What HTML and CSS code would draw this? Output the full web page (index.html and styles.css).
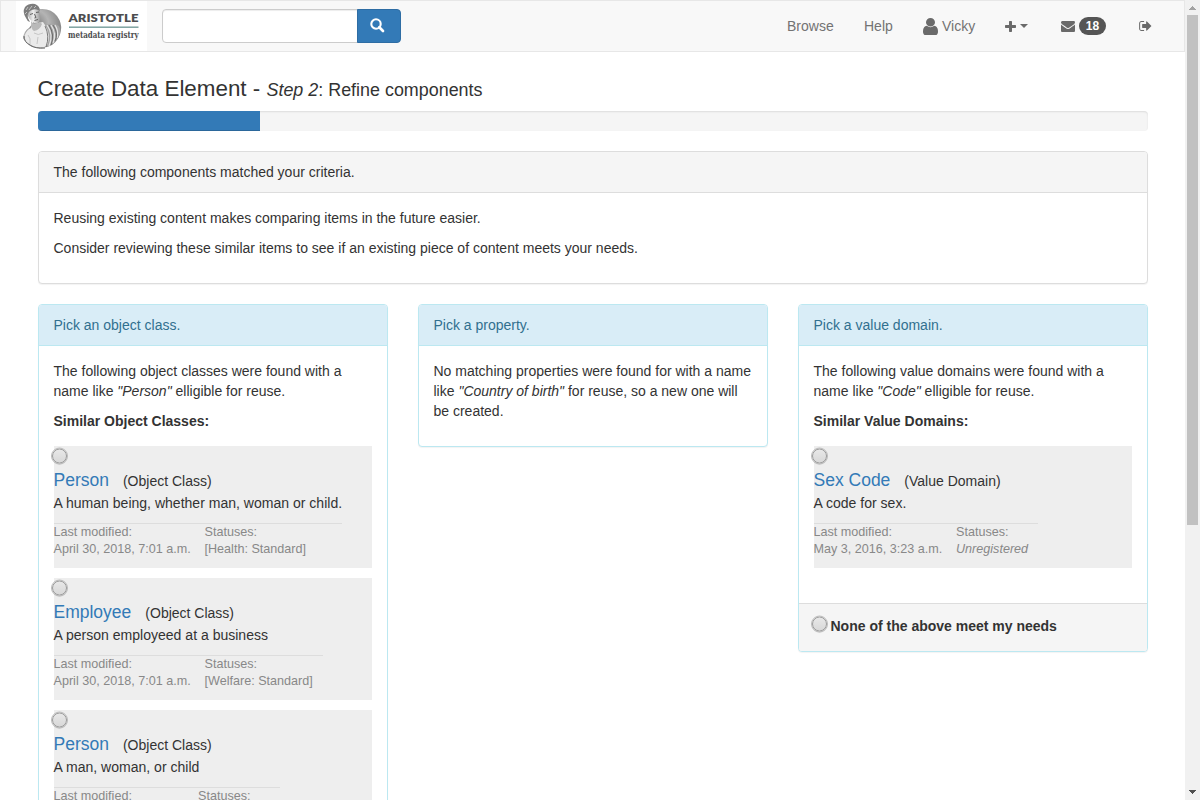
FILE: index.html
```html
<!DOCTYPE html>
<html lang="en">
<head>
<meta charset="utf-8">
<title>Create Data Element</title>
<link rel="stylesheet" href="styles.css">
</head>
<body>
<div class="page">
  <nav class="navbar">
    <a class="brand">
      <svg width="131" height="50" viewBox="0 0 131 50">
        <defs>
          <radialGradient id="shade" cx=".3" cy=".4" r=".75"><stop offset="0" stop-color="#777"/><stop offset=".5" stop-color="#b4b4b4"/><stop offset="1" stop-color="#808080"/></radialGradient>
          <linearGradient id="face" x1="0" x2="1"><stop offset="0" stop-color="#999"/><stop offset=".5" stop-color="#eee"/><stop offset="1" stop-color="#999"/></linearGradient>
          <filter id="soft"><feGaussianBlur stdDeviation=".5"/></filter>
        </defs>
        <rect width="131" height="50" fill="#fff"/>
        <g filter="url(#soft)">
          <path d="M24 8Q35 7 41 15Q46 22 45 29Q44 38 36 44Q27 49 16 46Q9 42 7 37Q8 30 13 27L17 22Z" fill="url(#shade)"/>
          <path d="M15 21Q17 25 22 22L27 21L31 27Q35 36 31 45Q24 48 15 45Q9 42 8 38Q9 31 13 28Q17 27 15 21Z" fill="#eaeaea"/>
          <path d="M15 20Q18 25 24 21L26 23Q24 29 18 30Q15 29 15 20Z" fill="#b9b9b9"/>
          <path d="M10 9Q13 4 20 6Q24 8 24 13Q25 18 23 21Q20 24 17 21Q12 18 10 9Z" fill="url(#face)"/>
          <path d="M10 17Q6 11 9 6Q13 2 19 3Q24 5 24 10L22 9Q18 7 14 10Q11 12 12 17L14 21Q11 20 10 17Z" fill="#7d7d7d"/>
          <path d="M10 9L12 6M13 9L16 5M18 7L20 5M9 13L11 11" stroke="#c9c9c9" stroke-width=".9" fill="none"/>
          <path d="M14 13.500L17 12.500M20 11.500L23 11M18.500 13L20 16.500L18.500 17M18.500 19.500L22 18.500" stroke="#555" stroke-width=".9" fill="none"/>
          <path d="M29 24Q37 21 43 25Q46 30 42 37Q38 43 31 46Q36 34 29 24Z" fill="#a5a5a5"/>
          <path d="M31 24Q38 34 33 45M35 24Q41 33 37 42M39 24Q43 30 41 37" stroke="#e5e5e5" stroke-width="1.200" fill="none"/>
          <path d="M33 24Q39 34 35 44M37 24Q43 33 39 40M29 25Q34 35 30 46" stroke="#5c5c5c" stroke-width=".8" fill="none"/>
          <path d="M8 35Q8 41 14 44Q20 48 29 47" stroke="#606060" stroke-width="1" fill="none"/>
          <path d="M12 34Q15 37 14 43M18 32Q22 35 27 32M22 36L21 43" stroke="#bdbdbd" stroke-width=".8" fill="none"/>
        </g>
        <text x="52.500" y="20.700" class="logo-name" textLength="70" lengthAdjust="spacingAndGlyphs">ARISTOTLE</text>
        <rect x="53" y="25.600" width="69.500" height="1.100" fill="#4f817e"/>
        <text x="52" y="37" class="logo-sub" textLength="70.500" lengthAdjust="spacingAndGlyphs">metadata registry</text>
      </svg>
    </a>
    <div class="search">
      <input class="search-input" type="text" aria-label="Search">
      <button class="search-button" aria-label="Search"><svg width="15" height="15" viewBox="0 0 15 15"><circle cx="6" cy="6" r="4.700" fill="none" stroke="#fff" stroke-width="2.100"/><path d="M9.300 9.300L13 13" stroke="#fff" stroke-width="2.700" stroke-linecap="round"/></svg></button>
    </div>
    <div class="menu">
      <a class="browse">Browse</a>
      <a class="help">Help</a>
      <a class="user"><svg width="15" height="17" viewBox="0 128 1280 1536" preserveAspectRatio="none"><path d="M1280 1399q0 109-62.500 187t-150.500 78h-854q-88 0-150.500-78t-62.500-187q0-85 8.500-160.500t31.500-152 58.500-131 94-89 134.500-34.500q131 128 313 128t313-128q76 0 134.500 34.500t94 89 58.500 131 31.500 152 8.500 160.500zm-256-887q0 159-112.500 271.500t-271.500 112.500-271.500-112.500-112.500-271.500 112.500-271.500 271.500-112.500 271.500 112.500 112.500 271.500z"/></svg><span>Vicky</span></a>
      <a class="create"><svg width="11" height="11" viewBox="0 0 11 11"><path d="M4.700 0h1.600q.7 0 .7.700v3.300h3.300q.7 0 .7.700v1.600q0 .7-.7.700H7v3.300q0 .7-.7.700H4.700q-.7 0-.7-.7V7H.7Q0 7 0 6.300V4.700Q0 4 .7 4H4V.7Q4 0 4.700 0z"/></svg><i class="caret"></i></a>
      <a class="inbox"><svg width="14" height="11" viewBox="0 256 1792 1408"><path d="M1792 710v794q0 66-47 113t-113 47h-1472q-66 0-113-47t-47-113v-794q44 49 101 87 362 246 497 345 57 42 92.500 65.500t94.500 48 110 24.500h2q51 0 110-24.500t94.500-48 92.500-65.500q170-123 498-345 57-39 100-87zm0-294q0 79-49 151t-122 123q-376 261-468 325-10 7-42.500 31t-54 38.500-52 32.500-57.500 27-50 9h-2q-23 0-50-9t-57.500-27-52-32.500-54-38.500-42.500-31q-91-64-262-182.500t-205-142.500q-62-42-117-115.500t-55-136.500q0-78 41.500-130t118.500-52h1472q65 0 112.500 47t47.500 113z"/></svg><span class="badge">18</span></a>
      <a class="logout"><svg width="12.500" height="10" viewBox="64 256 1568 1280"><path d="M704 1440q0 4 1 20t.5 26.500-3 23.500-10 19.500-20.500 6.500h-320q-119 0-203.500-84.500t-84.500-203.500v-704q0-119 84.500-203.500t203.500-84.500h320q13 0 22.500 9.500t9.500 22.500q0 4 1 20t.5 26.500-3 23.500-10 19.500-20.500 6.500h-320q-66 0-113 47t-47 113v704q0 66 47 113t113 47h312l11.500 1 11.500 3 8 5.500 7 9 2 13.500zm928-544q0 26-19 45l-544 544q-19 19-45 19t-45-19-19-45v-288h-448q-26 0-45-19t-19-45v-384q0-26 19-45t45-19h448v-288q0-26 19-45t45-19 45 19l544 544q19 19 19 45z"/></svg></a>
    </div>
  </nav>
  <main class="content">
    <h1 class="title">Create Data Element - <small><em>Step 2</em>: Refine components</small></h1>
    <div class="progress"><div class="progress-bar" style="width:20%"></div></div>
    <section class="panel intro">
      <div class="panel-heading">The following components matched your criteria.</div>
      <div class="panel-body"><p>Reusing existing content makes comparing items in the future easier.</p><p>Consider reviewing these similar items to see if an existing piece of content meets your needs.</p></div>
    </section>
    <div class="columns">
      <section class="panel info">
        <div class="panel-heading">Pick an object class.</div>
        <div class="panel-body">
          <p>The following object classes were found with a name like <em>"Person"</em> elligible for reuse.</p>
          <p><strong>Similar Object Classes:</strong></p>
          <div class="items">
            <div class="item"><span class="radio"></span>
              <div class="item-title"><a>Person</a>(Object Class)</div>
              <div class="item-text">A human being, whether man, woman or child.</div>
              <div class="meta meta-a"><div>Last modified:<br>April 30, 2018, 7:01 a.m.</div><div>Statuses:<br>[Health: Standard]</div></div>
            </div>
            <div class="item"><span class="radio"></span>
              <div class="item-title"><a>Employee</a>(Object Class)</div>
              <div class="item-text">A person employeed at a business</div>
              <div class="meta meta-b"><div>Last modified:<br>April 30, 2018, 7:01 a.m.</div><div>Statuses:<br>[Welfare: Standard]</div></div>
            </div>
            <div class="item"><span class="radio"></span>
              <div class="item-title"><a>Person</a>(Object Class)</div>
              <div class="item-text">A man, woman, or child</div>
              <div class="meta meta-c"><div>Last modified:</div><div>Statuses:</div></div>
            </div>
          </div>
        </div>
      </section>
      <section class="panel info">
        <div class="panel-heading">Pick a property.</div>
        <div class="panel-body"><p>No matching properties were found for with a name like <em>"Country of birth"</em> for reuse, so a new one will be created.</p></div>
      </section>
      <section class="panel info">
        <div class="panel-heading">Pick a value domain.</div>
        <div class="panel-body">
          <p>The following value domains were found with a name like <em>"Code"</em> elligible for reuse.</p>
          <p><strong>Similar Value Domains:</strong></p>
          <div class="items">
            <div class="item"><span class="radio"></span>
              <div class="item-title"><a>Sex Code</a>(Value Domain)</div>
              <div class="item-text">A code for sex.</div>
              <div class="meta meta-d"><div>Last modified:<br>May 3, 2016, 3:23 a.m.</div><div>Statuses:<br><em>Unregistered</em></div></div>
            </div>
          </div>
        </div>
        <div class="panel-footer"><span class="radio"></span><strong>None of the above meet my needs</strong></div>
      </section>
    </div>
  </main>
</div>
<div class="scrollbar">
  <svg class="arrow" width="15" height="15" viewBox="0 0 15 15" shape-rendering="crispEdges"><path d="M4 10L7.500 6L11 10z" fill="#a3a3a3"/></svg>
  <div class="thumb"></div>
  <svg class="arrow" width="15" height="15" viewBox="0 0 15 15" shape-rendering="crispEdges"><path d="M4 5L7.500 9L11 5z" fill="#505050"/></svg>
</div>
</body>
</html>
```
FILE: styles.css
```css
* { box-sizing: border-box; }
body { margin: 0; height: 800px; overflow: hidden; display: flex; background: #fff; color: #333; font: 14px/20px "Liberation Sans", Arial, sans-serif; }
svg { display: block; flex: none; }
p { margin: 0 0 10px; }
.page { width: 1185px; height: 800px; overflow: hidden; }
.navbar { display: flex; height: 52px; background: #f8f8f8; border: 1px solid #e7e7e7; padding-left: 15px; }
.brand { width: 131px; }
.logo-name { font: 800 11.5px Lato, sans-serif; fill: #4d4d4f; }
.logo-sub { font: 600 8.5px "DejaVu Serif Condensed", "DejaVu Serif", serif; fill: #4d4d4f; }
.search { display: flex; width: 239px; height: 34px; margin: 8px 0 0 15px; }
.search-input { width: 196px; height: 34px; margin: 0; border: 1px solid #ccc; border-radius: 4px 0 0 4px; background: #fff; box-shadow: inset 0 1px 1px rgba(0,0,0,.075); }
.search-button { display: flex; align-items: center; justify-content: center; width: 44px; margin-left: -1px; padding: 0 3px 1px 0; border: 1px solid #2e6da4; border-radius: 0 4px 4px 0; background: #337ab7; }
.menu { display: flex; align-items: center; height: 50px; flex: 1; margin-left: 386px; color: #737373; white-space: nowrap; }
.menu svg { fill: #6a6a6a; }
.menu a { display: flex; align-items: center; }
.browse { width: 77px; }
.help { width: 59px; }
.user { width: 82px; gap: 4px; }
.create { width: 56px; gap: 4px; }
.caret { border: 4.5px solid transparent; border-top-color: #6a6a6a; border-bottom: 0; }
.inbox { width: 78px; gap: 4px; }
.badge { width: 27px; height: 18px; border-radius: 9px; background: #555; color: #fff; font: bold 12px/18px "Liberation Sans", Arial, sans-serif; text-align: center; }
.content { width: 1110px; margin: 24px 0 0 37.5px; }
.title { margin: 0; height: 35px; font-size: 22.400px; font-weight: 400; line-height: 26px; white-space: nowrap; }
.title small { font-size: 17.920px; }
.progress { height: 20px; margin-bottom: 20px; overflow: hidden; border-radius: 4px; background: #f5f5f5; box-shadow: inset 0 1px 2px rgba(0,0,0,.1); }
.progress-bar { height: 20px; background: #337ab7; box-shadow: inset 0 -1px 0 rgba(0,0,0,.15); }
.panel { border: 1px solid #ddd; border-radius: 4px; background: #fff; box-shadow: 0 1px 1px rgba(0,0,0,.05); }
.panel-heading { height: 41px; padding: 10px 15px; border-bottom: 1px solid #ddd; border-radius: 3px 3px 0 0; background: #f5f5f5; }
.panel-body { padding: 15px; }
.intro { height: 133px; margin-bottom: 20px; }
.columns { display: grid; grid-template-columns: repeat(3, 350px); gap: 30px; align-items: start; }
.info { border-color: #bce8f1; }
.info .panel-heading { background: #d9edf7; border-color: #bce8f1; color: #31708f; }
.items { display: flex; flex-direction: column; gap: 10px; margin: 15px 0 20px; }
.item { height: 122px; background: #eee; }
.radio { display: block; flex: none; width: 15px; height: 15px; margin-left: -1.300px; border: 1px solid #999; outline: .5px solid #bbb; border-radius: 50%; background: linear-gradient(#e8e8e8, #d8d8d8); box-shadow: 0 1px 1px rgba(0,0,0,.15); }
.item .radio { transform: translateY(2.500px); }
.item-title { height: 27px; margin-top: 7px; line-height: 24px; white-space: nowrap; }
.item-title a { margin-right: 14px; font-size: 17.500px; color: #337ab7; }
.item-text { height: 28px; font-size: 14.040px; line-height: 16px; }
.meta { display: grid; border-top: 1px solid #ddd; color: #888; font-size: 12.600px; line-height: 17px; white-space: nowrap; }
.meta-a { width: 288.500px; grid-template-columns: 151px 1fr; }
.meta-b { width: 269.500px; grid-template-columns: 151px 1fr; }
.meta-c { width: 226.500px; grid-template-columns: 144.500px 1fr; }
.meta-d { width: 224.500px; grid-template-columns: 142.500px 1fr; }
.panel-footer { display: flex; height: 48px; padding: 12px 15px; gap: 3.300px; border-top: 1px solid #ddd; border-radius: 0 0 3px 3px; background: #f5f5f5; }
.panel-footer .radio { transform: translateY(.5px); }
.scrollbar { display: flex; flex-direction: column; width: 15px; height: 800px; background: #f1f1f1; }
.thumb { width: 11px; height: 510px; margin: 0 2px auto; background: #c1c1c1; }
```
